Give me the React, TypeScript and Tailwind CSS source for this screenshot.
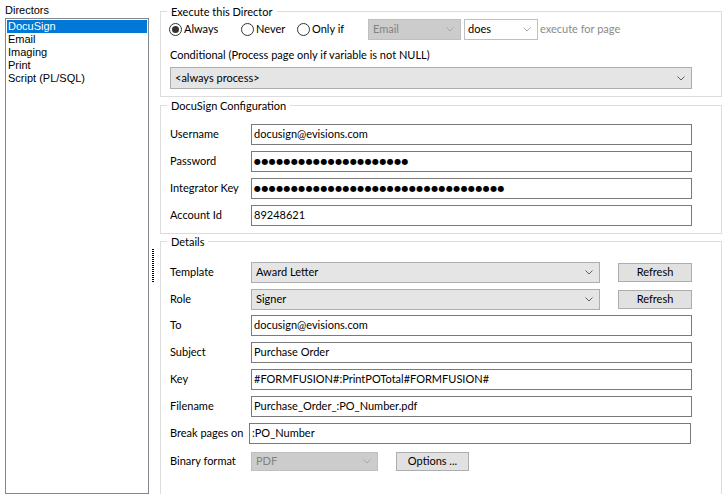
import React from "react";

type Chev = { color?: string };

function Chevron({ color = "#606060" }: Chev) {
  return (
    <svg width="8" height="5" viewBox="0 0 8 5" className="shrink-0">
      <path d="M0.5 0.5 L4 4 L7.5 0.5" fill="none" stroke={color} strokeWidth="1" />
    </svg>
  );
}

function Radio({ checked, label, width }: { checked?: boolean; label: string; width: string }) {
  return (
    <div className={`flex items-center ${width}`}>
      <div className="w-[13px] h-[13px] rounded-full border border-[#333333] flex items-center justify-center bg-white">
        {checked && <div className="w-[7px] h-[7px] rounded-full bg-[#333333]" />}
      </div>
      <span className="ml-[2px]">{label}</span>
    </div>
  );
}

function Combo({ text, className }: { text: string; className: string }) {
  return (
    <div
      className={`flex items-center justify-between h-[21px] border border-[#adadad] bg-[#e5e5e5] pl-[4px] pr-[6px] ${className}`}
    >
      <span>{text}</span>
      <Chevron />
    </div>
  );
}

function Field({ value, className = "w-[441px]" }: { value: React.ReactNode; className?: string }) {
  return (
    <div className={`flex items-center h-[21px] border border-[#7a7a7a] bg-white pl-[2px] ${className}`}>
      {value}
    </div>
  );
}

function Dots({ count }: { count: number }) {
  return (
    <span className="font-['DejaVu_Sans',sans-serif] text-[8px] tracking-[0.4px] leading-none">
      {"●".repeat(count)}
    </span>
  );
}

function Row({ label, children, className = "" }: { label: string; children: React.ReactNode; className?: string }) {
  return (
    <div className={`flex items-center h-[21px] ${className}`}>
      <div className="w-[81px] shrink-0 whitespace-nowrap">{label}</div>
      {children}
    </div>
  );
}

function Group({ title, className = "", children }: { title: string; className?: string; children: React.ReactNode }) {
  return (
    <fieldset className={`border border-[#dcdcdc] ${className}`}>
      <legend className="ml-[6px] px-[4px] leading-[15px]">{title}</legend>
      {children}
    </fieldset>
  );
}

const directors = ["DocuSign", "Email", "Imaging", "Print", "Script (PL/SQL)"];

export default function App() {
  return (
    <div className="w-[727px] h-[494px] overflow-hidden bg-white flex text-black text-[11px] font-['Lato',sans-serif]">
      {/* directors list */}
      <div className="w-[149px] shrink-0 pl-[5px] flex flex-col font-['Liberation_Sans',sans-serif] text-[11px]">
        <div className="h-[18px] pt-[3px] leading-[14px]">Directors</div>
        <div className="flex-1 border border-[#828790] p-px">
          {directors.map((d, i) => (
            <div
              key={d}
              className={`h-[13px] leading-[13px] pl-[1px] ${i === 0 ? "bg-[#0078d7] text-white" : ""}`}
            >
              {d}
            </div>
          ))}
        </div>
      </div>

      {/* splitter grip */}
      <div className="w-[11px] shrink-0 pl-[3px]">
        <div className="mt-[249px] w-[2px] h-[34px] bg-[repeating-linear-gradient(to_bottom,#000_0_1px,transparent_1px_2px)]" />
      </div>

      {/* settings */}
      <div className="flex-1 pr-[5px] flex flex-col">
        <Group title="Execute this Director" className="mt-[4px]">
          <div className="pl-[9px] pb-[7px]">
            <div className="flex items-center h-[21px] -ml-px">
              <Radio checked label="Always" width="w-[72px]" />
              <Radio label="Never" width="w-[56px]" />
              <Radio label="Only if" width="w-[71px]" />
              <div className="flex items-center justify-between w-[93px] h-[21px] border border-[#bfbfbf] bg-[#cccccc] pl-[4px] pr-[6px] text-[#838383]">
                <span>Email</span>
                <Chevron color="#a8a8a8" />
              </div>
              <div className="ml-[3px] flex items-center justify-between w-[74px] h-[21px] border border-[#bfbfbf] bg-white pl-[3px] pr-[6px]">
                <span>does</span>
                <Chevron color="#a8a8a8" />
              </div>
              <span className="ml-[2px] text-[#8a8a8a]">execute for page</span>
            </div>
            <div className="mt-[7px] leading-[16px]">Conditional (Process page only if variable is not NULL)</div>
            <Combo text="<always process>" className="mt-[4px] w-[522px] h-[22px]" />
          </div>
        </Group>

        <Group title="DocuSign Configuration" className="mt-[1px]">
          <div className="pl-[9px] pt-[11px] pb-[7px] flex flex-col gap-[6px]">
            <Row label="Username">
              <Field value="docusign@evisions.com" />
            </Row>
            <Row label="Password">
              <Field value={<Dots count={21} />} />
            </Row>
            <Row label="Integrator Key">
              <Field value={<Dots count={34} />} />
            </Row>
            <Row label="Account Id">
              <Field value="89248621" />
            </Row>
          </div>
        </Group>

        <Group title="Details" className="h-[320px] shrink-0">
          <div className="pl-[9px] pt-[13px] flex flex-col gap-[6px]">
            <Row label="Template">
              <Combo text="Award Letter" className="w-[349px]" />
              <button className="ml-[18px] w-[74px] h-[19px] border border-[#adadad] bg-[#e1e1e1] flex items-center justify-center">
                Refresh
              </button>
            </Row>
            <Row label="Role">
              <Combo text="Signer" className="w-[349px]" />
              <button className="ml-[18px] w-[74px] h-[19px] border border-[#adadad] bg-[#e1e1e1] flex items-center justify-center">
                Refresh
              </button>
            </Row>
            <Row label="To" className="-mt-px">
              <Field value="docusign@evisions.com" />
            </Row>
            <Row label="Subject">
              <Field value="Purchase Order" />
            </Row>
            <Row label="Key">
              <Field value="#FORMFUSION#:PrintPOTotal#FORMFUSION#" />
            </Row>
            <Row label="Filename">
              <Field value="Purchase_Order_:PO_Number.pdf" />
            </Row>
            <Row label="Break pages on">
              <Field value=":PO_Number" className="-ml-[2px] w-[442px]" />
            </Row>
            <Row label="Binary format" className="mt-px">
              <div className="flex items-center justify-between w-[127px] h-[19px] border border-[#bfbfbf] bg-[#cccccc] pl-[4px] pr-[6px] text-[#838383]">
                <span>PDF</span>
                <Chevron color="#a8a8a8" />
              </div>
              <button className="ml-[18px] w-[73px] h-[19px] border border-[#adadad] bg-[#e1e1e1] flex items-center justify-center">
                Options ...
              </button>
            </Row>
          </div>
        </Group>
      </div>
    </div>
  );
}
